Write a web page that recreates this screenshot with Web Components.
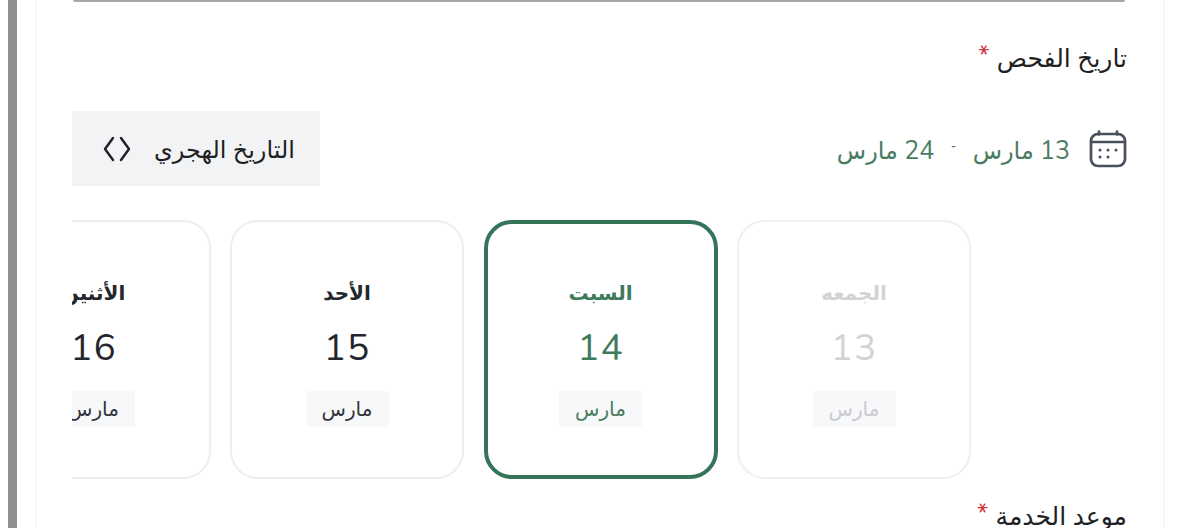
<!DOCTYPE html>
<html lang="ar" dir="rtl"><head><meta charset="utf-8">
<style>
html,body{margin:0;padding:0;height:528px;overflow:hidden;background:#fff;font-family:"Noto Sans","DejaVu Sans",sans-serif}
</style></head><body>
<app-page>
  <form-label style="--top:40px">تاريخ الفحص</form-label>
  <date-head></date-head>
  <day-strip>
    <day-card state="disabled" day="الجمعه" num="13"></day-card>
    <day-card state="selected" day="السبت" num="14"></day-card>
    <day-card day="الأحد" num="15"></day-card>
    <day-card day="الأثنين" num="16"></day-card>
  </day-strip>
  <form-label style="--top:21px">موعد الخدمة</form-label>
</app-page>
<script>
const AR='"Noto Sans","DejaVu Sans",sans-serif';
const NUM='Nunito,Lato,"Noto Sans",sans-serif';
function def(name,html){customElements.define(name,class extends HTMLElement{
  connectedCallback(){ if(this.shadowRoot)return; const r=this.attachShadow({mode:'open'}); r.innerHTML=typeof html==='function'?html(this):html; }
});}
def('app-page',`<style>
:host{display:flex;direction:ltr;height:528px;overflow:hidden;background:#fff}
.rail{flex:none;width:9px;margin-left:8px;background:#8f8f8f}
.gap{flex:none;width:18px;background:#fff}
.card{flex:none;width:1130px;box-sizing:border-box;height:528px;background:#fff;border-left:2px solid #f8f8f9;border-right:2px solid #f6f6f7;padding:0 36px 0 35px;direction:rtl;overflow:hidden}
.input{height:2px;background:#a6a6ac;border-radius:0 0 4px 4px;margin:0 2px 0 1px}
.rest{flex:1;background:#fff}
</style><div class="rail"></div><div class="gap"></div><div class="card"><div class="input"></div><slot></slot></div><div class="rest"></div>`);
def('form-label',`<style>
:host{display:block;margin-top:var(--top,0);font:400 25px/30px ${AR};color:#1f1f24;height:30px}
.req{color:#d0343f;font-size:26px;margin-right:7px;font-family:${NUM};display:inline-block;line-height:20px;vertical-align:3px}
</style><slot></slot><span class="req">*</span>`);
def('date-head',`<style>
:host{display:flex;align-items:center;justify-content:space-between;margin-top:39px;height:75px}
.range{display:flex;align-items:center;color:#4a7c62;font:400 24px/30px ${AR}}
svg{display:block;flex:none;margin-left:19px}
.t{position:relative;top:2px}
.n{font-family:${NUM};letter-spacing:.6px;font-size:25px}
.sep{margin:0 17px;font-size:14px;line-height:20px;position:relative;top:-3px}
.btn{display:flex;align-items:center;box-sizing:border-box;width:248px;height:75px;background:#f2f3f5;padding:0 25px 0 31px;color:#1f1f24;font:400 24px/30px ${AR};justify-content:space-between}
.btn svg{margin:0}
</style>
<div class="range">
<svg width="38" height="38" viewBox="0 0 38 38" fill="none" stroke="#4a505c" stroke-width="2.7" stroke-linecap="round" stroke-linejoin="round"><rect x="2" y="4" width="34" height="32" rx="7"/><path d="M2 12h34M10 1.5v3M28 1.5v3"/><g stroke="none" fill="#4a505c"><circle cx="11" cy="20" r="1.5"/><circle cx="19" cy="20" r="1.5"/><circle cx="27" cy="20" r="1.5"/><circle cx="11" cy="27" r="1.5"/><circle cx="19" cy="27" r="1.5"/></g></svg>
<span class="t"><span class="n">13</span> مارس</span><span class="sep">-</span><span class="t"><span class="n">24</span> مارس</span></div>
<div class="btn"><span>التاريخ الهجري</span><svg width="28" height="26" viewBox="0 0 28 26" fill="none" stroke="#1f1f24" stroke-width="2.4" stroke-linecap="round" stroke-linejoin="round"><path d="M10 2 2 13l8 11M18 2l8 11-8 11"/></svg></div>`);
def('day-strip',`<style>
:host{display:flex;gap:19.5px;margin-top:34px;padding-right:156px;overflow:hidden;height:259px;box-sizing:border-box}
</style><slot></slot>`);
def('day-card',el=>{
 const st=el.getAttribute('state');
 const c=st==='disabled'?'#d2d3d6':st==='selected'?'#3f7a5b':'#25262b';
 const bd=st==='selected'?'4px solid #36745a':st==='disabled'?'2px solid #efeff1':'2px solid #eceef1';
 return `<style>
:host{display:flex;flex:none;width:234px;height:259px;box-sizing:border-box;border:${bd};border-radius:28px;background:#fff;flex-direction:column;align-items:center;padding-top:${st==='selected'?'54px':'56px'};color:${c}}
.d{font:700 20px/30px ${AR};height:30px}
.n{font:400 37px/46px ${NUM};margin-top:17px;letter-spacing:1px}
.m{box-sizing:border-box;width:83px;height:36px;margin-top:20px;background:#f7f8fa;border-radius:2px;text-align:center;font:400 20px/36px ${AR};${st==='disabled'?'color:#c9cace':st==='selected'?'color:#4a7c62':'color:#33343a'}}
</style><div class="d">${el.getAttribute('day')}</div><div class="n">${el.getAttribute('num')}</div><div class="m">مارس</div>`;});
</script>
</body></html>
